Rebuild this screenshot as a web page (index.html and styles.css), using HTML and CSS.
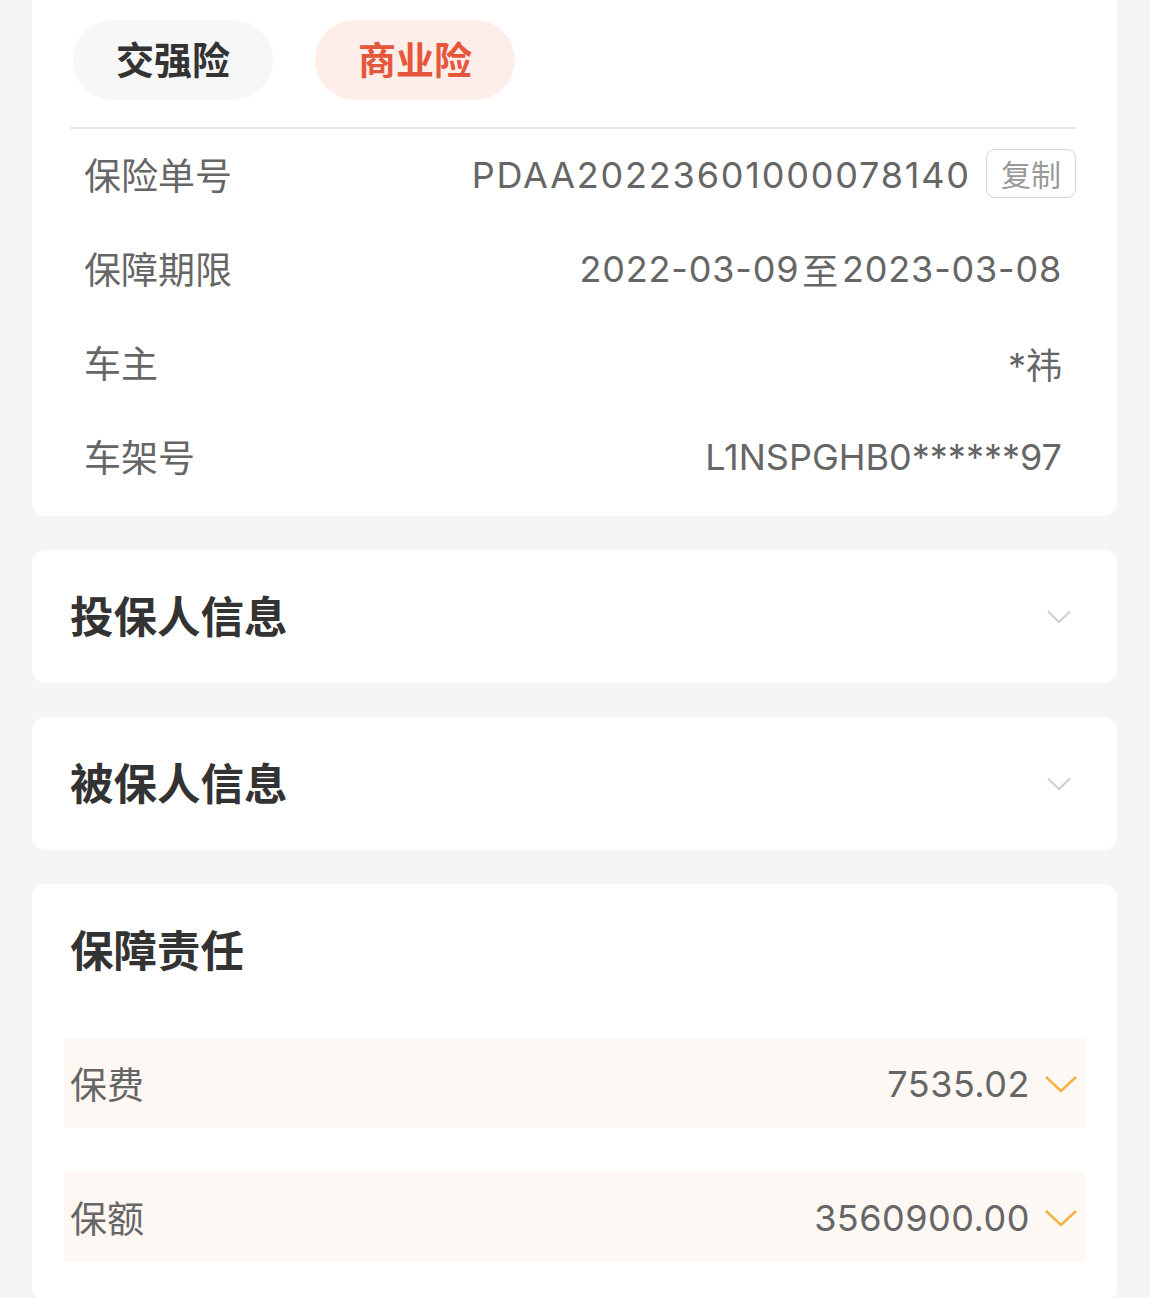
FILE: index.html
```html
<!DOCTYPE html>
<html>

<head>
  <meta charset="utf-8">
  <link rel="stylesheet" href="styles.css">
</head>

<body>
  <div class="page">
    <div class="card policy-card">
      <div class="tabs">
        <div class="tab">交强险</div>
        <div class="tab active">商业险</div>
      </div>
      <div class="divider"></div>
      <div class="info-row">
        <span class="info-label">保险单号</span>
        <span class="info-value"><span class="policy-no">PDAA20223601000078140</span><span class="copy-btn">复制</span></span>
      </div>
      <div class="info-row">
        <span class="info-label">保障期限</span>
        <span class="info-value date">2022-03-09<span class="sep">至</span>2023-03-08</span>
      </div>
      <div class="info-row">
        <span class="info-label">车主</span>
        <span class="info-value">*祎</span>
      </div>
      <div class="info-row">
        <span class="info-label">车架号</span>
        <span class="info-value">L1NSPGHB0******97</span>
      </div>
    </div>

    <div class="card">
      <div class="card-header">
        <span class="card-title">投保人信息</span>
        <svg class="chevron" width="24" height="14" viewBox="0 0 24 14"><path d="M1 1.5 L12 12 L23 1.5" fill="none" stroke="#cfcfcf" stroke-width="2"/></svg>
      </div>
    </div>

    <div class="card">
      <div class="card-header">
        <span class="card-title">被保人信息</span>
        <svg class="chevron" width="24" height="14" viewBox="0 0 24 14"><path d="M1 1.5 L12 12 L23 1.5" fill="none" stroke="#cfcfcf" stroke-width="2"/></svg>
      </div>
    </div>

    <div class="card duty-card">
      <div class="card-header">
        <span class="card-title">保障责任</span>
      </div>
      <div class="duty-list">
        <div class="duty-row">
          <span class="info-label">保费</span>
          <span class="duty-value">7535.02
            <svg width="34" height="18" viewBox="0 0 34 18"><path d="M2 2 L17 16 L32 2" fill="none" stroke="#f2b347" stroke-width="2.6"/></svg>
          </span>
        </div>
        <div class="duty-row">
          <span class="info-label">保额</span>
          <span class="duty-value">3560900.00
            <svg width="34" height="18" viewBox="0 0 34 18"><path d="M2 2 L17 16 L32 2" fill="none" stroke="#f2b347" stroke-width="2.6"/></svg>
          </span>
        </div>
      </div>
    </div>
  </div>
</body>

</html>
```

FILE: styles.css
```css
body {
  margin: 0;
  background: #f5f5f5;
  font-family: "Inter", "Noto Sans CJK SC", sans-serif;
  color: #666;
}
.page {
  padding: 0 33px 40px 32px;
  display: flex;
  flex-direction: column;
  gap: 34px;
}

.card {
  background: #fff;
  border-radius: 14px;
}
.policy-card {
  border-radius: 0 0 14px 14px;
  padding: 20px 40px 11px 38px;
}

.tabs {
  display: flex;
  gap: 42px;
  padding-left: 3px;
  margin-bottom: 27px;
}
.tab {
  width: 200px;
  height: 80px;
  box-sizing: border-box;
  padding-bottom: 5px;
  border-radius: 40px;
  background: #f7f7f7;
  color: #333;
  font-size: 38px;
  font-weight: bold;
  display: flex;
  align-items: center;
  justify-content: center;
}
.tab.active {
  background: #fdeee9;
  color: #e5573c;
}
.divider {
  height: 2px;
  background: #e8e8e8;
}

.info-row {
  height: 94px;
  box-sizing: border-box;
  padding: 0 15px 5px 14px;
  display: flex;
  align-items: center;
  justify-content: space-between;
}
.info-label {
  font-size: 37px;
  color: #666;
}
.info-value {
  font-size: 36px;
  color: #666;
  padding-top: 3px;
  display: flex;
  align-items: center;
}
.policy-no {
  letter-spacing: 1.8px;
  margin-right: -1.8px;
}
.date {
  letter-spacing: 0.8px;
}
.sep {
  margin: 0 3px;
}
.copy-btn {
  margin-left: 17px;
  margin-right: -14px;
  margin-top: -3px;
  border: 1.5px solid #d6d6d6;
  border-radius: 9px;
  font-size: 30px;
  color: #999;
  letter-spacing: 0;
  height: 45px;
  padding: 0 14px 2px;
  display: flex;
  align-items: center;
}

.card-header {
  height: 133px;
  box-sizing: border-box;
  padding: 0 46px 5px 38px;
  display: flex;
  align-items: center;
  justify-content: space-between;
}
.card-title {
  font-size: 43.5px;
  font-weight: bold;
  color: #333;
}
.chevron {
  display: block;
  margin-top: 5px;
}

.duty-card {
  padding: 0 32px 40px;
}
.duty-card .card-header {
  padding: 0 6px 5px;
}
.duty-list {
  margin-top: 21px;
  display: flex;
  flex-direction: column;
  gap: 44px;
}
.duty-row {
  height: 90px;
  box-sizing: border-box;
  padding: 0 7px 0 6px;
  background: #fdf8f3;
  display: flex;
  align-items: center;
  justify-content: space-between;
}
.duty-value {
  font-size: 36px;
  color: #666;
  letter-spacing: 0.5px;
  padding-top: 2px;
  display: flex;
  align-items: center;
  gap: 14px;
}
.duty-value svg {
  display: block;
}
```
